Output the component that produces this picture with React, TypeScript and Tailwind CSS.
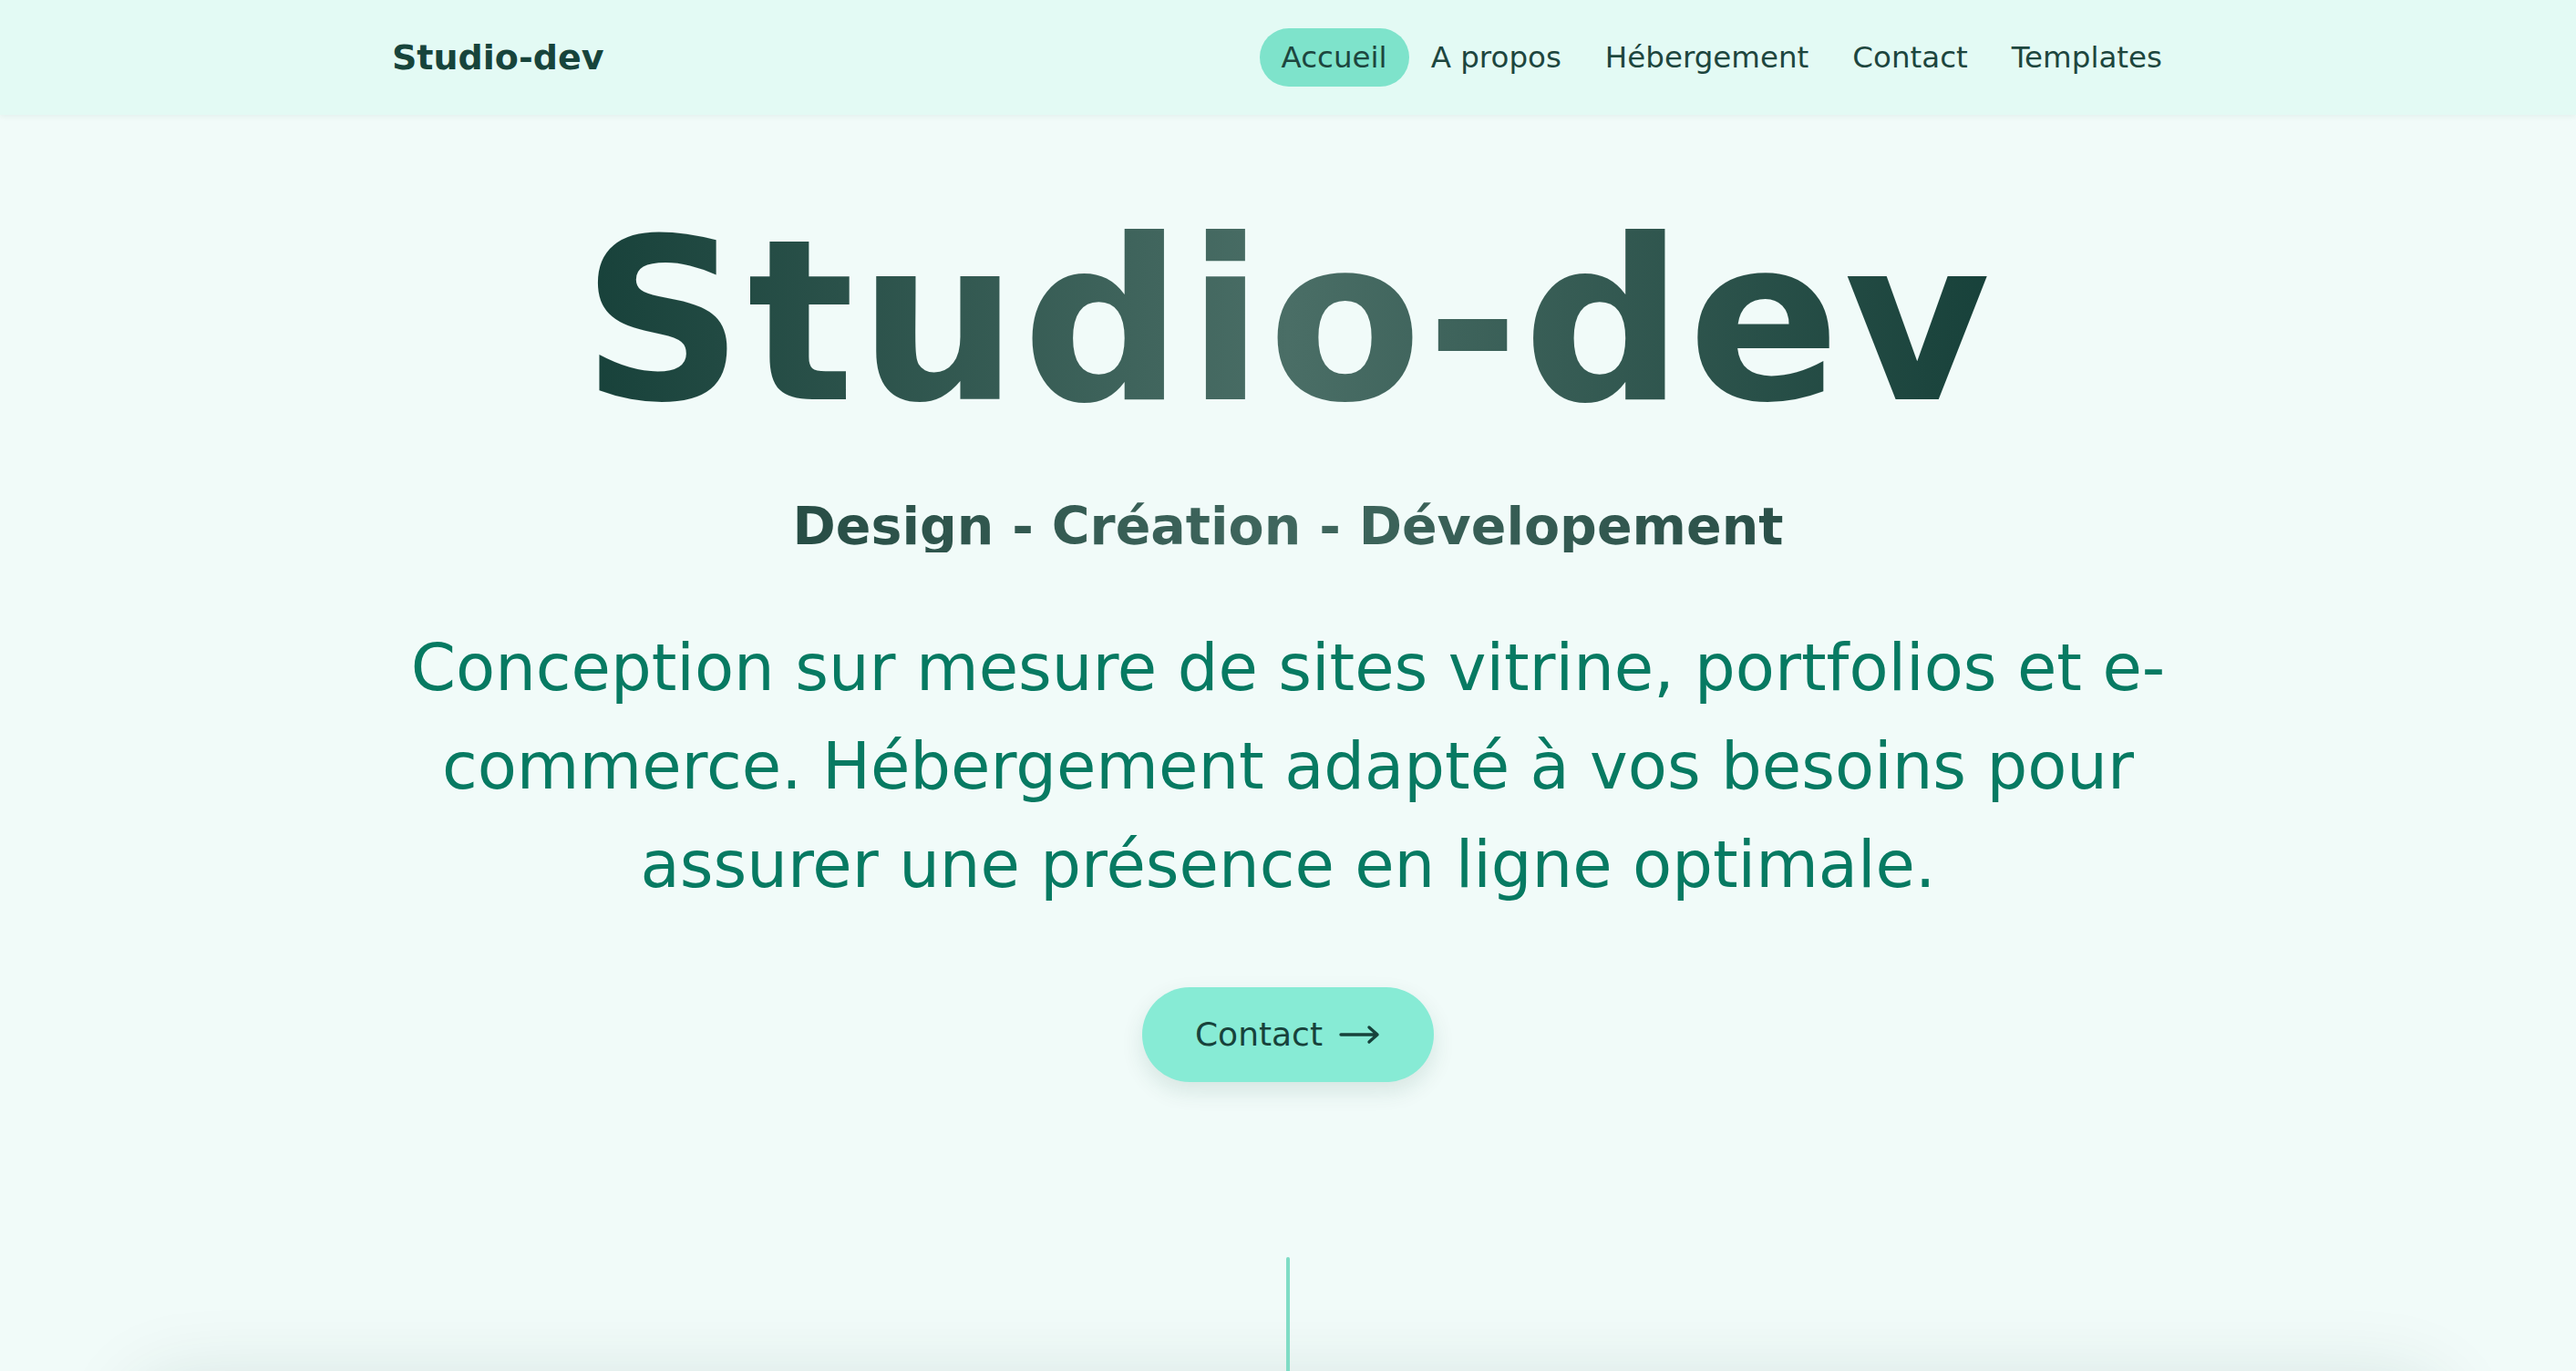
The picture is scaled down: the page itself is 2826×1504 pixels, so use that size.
const navItems = [
  { name: "Accueil", active: true },
  { name: "A propos" },
  { name: "Hébergement" },
  { name: "Contact" },
  { name: "Templates" }
]

function Header() {
  return (
    <header className="relative z-20 bg-[#e3faf4] shadow-[0_2px_6px_rgba(20,60,50,0.06)]">
      <div className="mx-auto flex h-[126px] max-w-[1966px] items-center justify-between">
        <a href="#" className="text-[38px] font-bold text-[#17443b]">
          Studio-dev
        </a>
        <nav className="flex items-center">
          {navItems.map((item) => (
            <a
              key={item.name}
              href="#"
              className={
                item.active
                  ? "flex h-[64px] items-center rounded-full bg-[#7ee3cb] px-6 text-[32.5px] text-[#1d463e]"
                  : "flex h-[64px] items-center rounded-full px-6 text-[32.5px] text-[#1d463e]"
              }
            >
              {item.name}
            </a>
          ))}
        </nav>
      </div>
    </header>
  )
}

function ArrowRight() {
  return (
    <svg width="46" height="22" viewBox="0 0 46 22" fill="none" aria-hidden="true">
      <path
        d="M2 11h40M33 3l9 8-9 8"
        stroke="currentColor"
        strokeWidth="3.4"
        strokeLinecap="round"
        strokeLinejoin="round"
      />
    </svg>
  )
}

export default function App() {
  return (
    <div className="min-h-screen bg-[#f1fbf9] font-['DejaVu_Sans',sans-serif]">
      <Header />
      <main className="flex flex-col items-center">
        <h1 className="mt-[104px] inline-block bg-gradient-to-r from-[#17413a] via-[#4a6e66] to-[#17413a] bg-clip-text text-[246px] leading-none font-bold tracking-[4.5px] text-transparent">
          Studio-dev
        </h1>
        <h2 className="mt-[73px] inline-block bg-gradient-to-r from-[#274d45] via-[#40675e] to-[#2a5048] bg-clip-text text-[57px] leading-none font-bold text-transparent">
          Design - Création - Dévelopement
        </h2>
        <p className="mt-[73px] max-w-[1980px] text-center text-[70.5px] leading-[108px] text-[#077a62]">
          Conception sur mesure de sites vitrine, portfolios et e-
          <br />
          commerce. Hébergement adapté à vos besoins pour
          <br />
          assurer une présence en ligne optimale.
        </p>
        <a
          href="#"
          className="mt-[80px] flex h-[104px] w-[320px] items-center justify-center gap-[18px] rounded-full bg-[#87ebd5] text-[36px] text-[#17423b] shadow-[0_10px_24px_rgba(20,70,60,0.12)]"
        >
          Contact
          <ArrowRight />
        </a>
        <div className="relative z-10 mt-[192px] h-[140px] w-[4px] rounded-t-full bg-[#7fdcc5]" />
      </main>
      <section className="mx-[150px] h-[600px] rounded-[40px] bg-[#f1fbf9] shadow-[0_0_90px_rgba(20,60,50,0.14)]" />
    </div>
  )
}
